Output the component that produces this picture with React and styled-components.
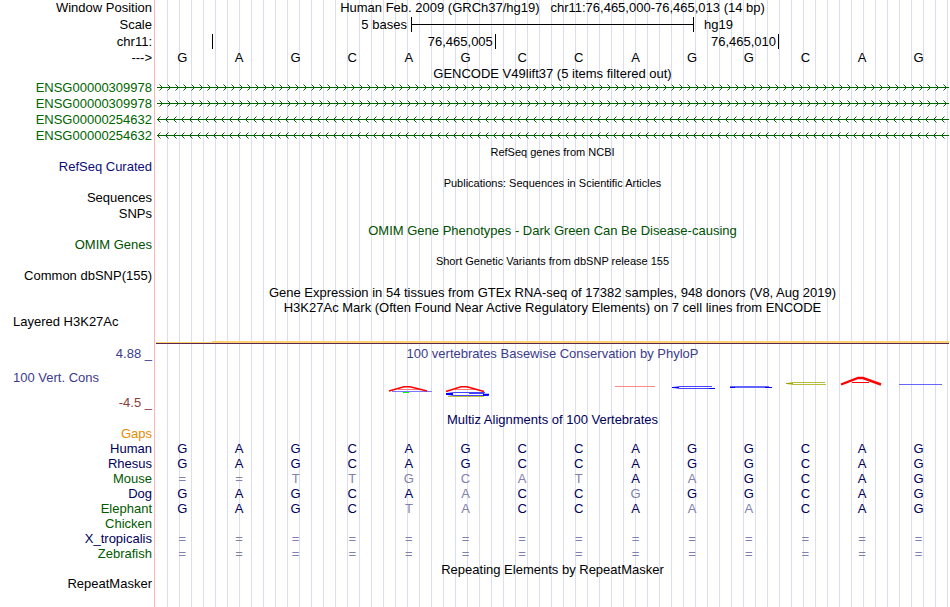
import styled, { createGlobalStyle } from "styled-components"

const species = [
    { name: "Human", color: "#00005a", bases: "GAGCAGCCAGGCAG", faded: "" },
    { name: "Rhesus", color: "#00005a", bases: "GAGCAGCCAGGCAG", faded: "" },
    { name: "Mouse", color: "#005a00", bases: "==TTGCATAAGCAG", faded: "xxxxxxxx.x...." },
    { name: "Dog", color: "#00005a", bases: "GAGCAACCGGGCAG", faded: ".....x..x....." },
    { name: "Elephant", color: "#005a00", bases: "GAGCTACCAAACAG", faded: "....xx...xx..." },
    { name: "Chicken", color: "#005a00", bases: "", faded: "" },
    { name: "X_tropicalis", color: "#00005a", bases: "==============", faded: "xxxxxxxxxxxxxx" },
    { name: "Zebrafish", color: "#005a00", bases: "==============", faded: "xxxxxxxxxxxxxx", height: 16 }
]

const genes = [
    { id: "ENSG00000309978", forward: true },
    { id: "ENSG00000309978", forward: true },
    { id: "ENSG00000254632", forward: false },
    { id: "ENSG00000254632", forward: false }
]

function Bases({ bases, faded = "", color }) {
    return (
        <BaseRow $color={color}>
            {bases.split("").map((b, i) => <Base key={i} $faded={faded[i] === "x"}>{b}</Base>)}
        </BaseRow>
    )
}

function GeneArrows({ id, forward }) {
    return (
        <Strand height="16" shapeRendering="crispEdges">
            <defs>
                <pattern id={id} width="8" height="16" patternUnits="userSpaceOnUse">
                    {forward
                        ? <>
                            <path d="M4 5h1v1h-1zM5 6h1v1h-1zM6 7h1v1h-1zM5 8h1v1h-1zM4 9h1v1h-1z" fill="#006400" />
                            <path d="M3 4h1v1h-1zM3 10h1v1h-1z" fill="#7fb17f" />
                        </>
                        : <>
                            <path d="M3 5h1v1h-1zM2 6h1v1h-1zM1 7h1v1h-1zM2 8h1v1h-1zM3 9h1v1h-1z" fill="#006400" />
                            <path d="M4 4h1v1h-1zM4 10h1v1h-1z" fill="#7fb17f" />
                        </>}
                </pattern>
            </defs>
            <rect width="100%" height="16" fill={`url(#${id})`} />
            <rect x="1" y="7" width="100%" height="1" fill="#006400" />
        </Strand>
    )
}

function Conservation() {
    return (
        <Logo height="51" viewBox="156 361 793 51" preserveAspectRatio="none" fill="none">
            <path d="M398 389.5H419" stroke="#f77" />
            <path d="M392 391.5H432" stroke="#77f" />
            <path d="M389 391L404 386.8H410L427 391" stroke="#f00" strokeWidth="1.6" />
            <path d="M403 392.5H409" stroke="#0f0" />
            <path d="M455 389.5H476" stroke="#f77" />
            <path d="M448 396.5H484" stroke="#c0c040" />
            <path d="M485 392.5H454L447 393.5V394.5L454 395.5H488M469 393.5H484" stroke="#44f" />
            <path d="M446 394H453M483 394.8H489" stroke="#00f" strokeWidth="2" />
            <path d="M446 391.5L461 386.8H467L484 391.5" stroke="#f00" strokeWidth="1.6" />
            <path d="M615 386.5H655" stroke="#f88" />
            <path d="M712 386.5H680L673 387.5L680 388.5H715" stroke="#44f" />
            <path d="M672 387.5H679M709 388.5H715" stroke="#00f" />
            <path d="M769 386.5H730M733 387.5H772" stroke="#66f" />
            <path d="M730 387.5H735M765 387.5H772" stroke="#00f" />
            <path d="M825 382.5H793L787 383.5L793 384.5H826" stroke="#bbbb3a" />
            <path d="M786 383.5H793" stroke="#a0a000" />
            <path d="M852 382.5H869" stroke="#f00" />
            <path d="M841 384.5L858 378H863L881 384.5" stroke="#f00" strokeWidth="2.4" />
            <path d="M899 384.5H942" stroke="#66f" />
        </Logo>
    )
}

export default function App() {
    return (
        <>
            <GlobalStyle />
            <Browser>
                <Row $height={17}>
                    <Label>Window Position</Label>
                    <Title>Human Feb. 2009 (GRCh37/hg19)&nbsp;&nbsp; chr11:76,465,000-76,465,013 (14 bp)</Title>
                </Row>
                <Row $height={17}>
                    <Label>Scale</Label>
                    <Scale>
                        <ScaleText $right>5 bases</ScaleText>
                        <ScaleBar />
                        <ScaleText>hg19</ScaleText>
                    </Scale>
                </Row>
                <Row $height={16}>
                    <Label>chr11:</Label>
                    <Ruler>
                        <Tick />
                        <Tick>76,465,005</Tick>
                        <Tick>76,465,010</Tick>
                    </Ruler>
                </Row>
                <Row $height={16}>
                    <Label>---&gt;</Label>
                    <Bases bases="GAGCAGCCAGGCAG" color="#000" />
                </Row>
                <Row $height={14}>
                    <Label />
                    <Title>GENCODE V49lift37 (5 items filtered out)</Title>
                </Row>
                {genes.map((g, i) => (
                    <Row key={i} $height={16}>
                        <Label $color="#006400">{g.id}</Label>
                        <GeneArrows id={`gene${i}`} forward={g.forward} />
                    </Row>
                ))}
                <Row $height={15}>
                    <Label />
                    <Title $small>RefSeq genes from NCBI</Title>
                </Row>
                <Row $height={16}>
                    <Label $color="#0c0c78">RefSeq Curated</Label>
                </Row>
                <Row $height={15}>
                    <Label />
                    <Title $small>Publications: Sequences in Scientific Articles</Title>
                </Row>
                <Row $height={16}>
                    <Label>Sequences</Label>
                </Row>
                <Row $height={17}>
                    <Label>SNPs</Label>
                </Row>
                <Row $height={14}>
                    <Label />
                    <Title $color="#005000">OMIM Gene Phenotypes - Dark Green Can Be Disease-causing</Title>
                </Row>
                <Row $height={16}>
                    <Label $color="#005000">OMIM Genes</Label>
                </Row>
                <Row $height={15}>
                    <Label />
                    <Title $small>Short Genetic Variants from dbSNP release 155</Title>
                </Row>
                <Row $height={17}>
                    <Label>Common dbSNP(155)</Label>
                </Row>
                <Row $height={15}>
                    <Label />
                    <Title>Gene Expression in 54 tissues from GTEx RNA-seq of 17382 samples, 948 donors (V8, Aug 2019)</Title>
                </Row>
                <Row $height={14}>
                    <Label />
                    <Title>H3K27Ac Mark (Often Found Near Active Regulatory Elements) on 7 cell lines from ENCODE</Title>
                </Row>
                <Row $height={32}>
                    <Label $left>Layered H3K27Ac</Label>
                    <Signal />
                </Row>
                <Row $height={15}>
                    <Label $color="#3c3c8c">4.88 _</Label>
                    <Title $color="#3c3c8c">100 vertebrates Basewise Conservation by PhyloP</Title>
                </Row>
                <Row $height={51}>
                    <ConsLabels>
                        <Label $left $color="#3c3c8c">100 Vert. Cons</Label>
                        <Label $color="#8c3c3c">-4.5 _</Label>
                    </ConsLabels>
                    <Conservation />
                </Row>
                <Row $height={14}>
                    <Label />
                    <Title $color="#00005a">Multiz Alignments of 100 Vertebrates</Title>
                </Row>
                <Row $height={15}>
                    <Label $color="#e68a00">Gaps</Label>
                </Row>
                {species.map((s) => (
                    <Row key={s.name} $height={s.height || 15}>
                        <Label $color={s.color}>{s.name}</Label>
                        <Bases bases={s.bases} faded={s.faded} color="#00005a" />
                    </Row>
                ))}
                <Row $height={14}>
                    <Label />
                    <Title>Repeating Elements by RepeatMasker</Title>
                </Row>
                <Row $height={15}>
                    <Label>RepeatMasker</Label>
                </Row>
            </Browser>
        </>
    )
}

const GlobalStyle = createGlobalStyle`
    body{
    margin: 0;
    background-color: #fff;
    color: #000;
    font-family: 'Liberation Sans', Arial, Helvetica, sans-serif;
    font-size: 13px;
    }
`
const Browser = styled.main`
    box-sizing: border-box;
    min-height: 100vh;
    padding-right: 1px;
    background-image:
        linear-gradient(to right, #fff 154px, #ffb4b4 154px, #ffb4b4 155px, transparent 155px),
        repeating-linear-gradient(to right, transparent 0px, transparent 11px, #dcdcf5 11px, #dcdcf5 12px);
    background-size: 156px 100%, calc(100% - 157px) 100%;
    background-position: 0px 0px, 156px 0px;
    background-repeat: no-repeat;
`
const Row = styled.div`
    display: grid;
    grid-template-columns: 156px 1fr;
    height: ${props => props.$height}px;
    line-height: 16px;
    white-space: nowrap;
`
const Label = styled.div`
    box-sizing: border-box;
    width: 156px;
    padding: 0px 4px 0px 13px;
    text-align: ${props => props.$left ? "left" : "right"};
    color: ${props => props.$color || "#000"};
`
const Title = styled.div`
    text-align: center;
    font-size: ${props => props.$small ? 11 : 13}px;
    color: ${props => props.$color || "#000"};
`
const Scale = styled.div`
    display: grid;
    grid-template-columns: 9fr 10fr 9fr;
`
const ScaleText = styled.span`
    padding: 0px ${props => props.$right ? 4 : 10}px;
    text-align: ${props => props.$right ? "right" : "left"};
`
const ScaleBar = styled.div`
    height: 15px;
    border-left: 1px solid #000;
    border-right: 1px solid #000;
    background: linear-gradient(#000, #000) 0px 7px / 100% 1px no-repeat;
`
const Ruler = styled.div`
    display: grid;
    grid-template-columns: 1fr 5fr 5fr 3fr;
`
const Tick = styled.div`
    height: 15px;
    padding-right: 2px;
    border-right: 1px solid #000;
    text-align: right;
`
const BaseRow = styled.div`
    display: grid;
    grid-template-columns: repeat(14, 1fr);
    margin: 0px 2px 0px -2px;
    text-align: center;
    color: ${props => props.$color};
`
const Base = styled.span`
    color: ${props => props.$faded ? "#8080ad" : "inherit"};
`
const Strand = styled.svg`
    display: block;
    width: 100%;
`
const Signal = styled.div`
    height: 2px;
    margin-top: 27px;
    background-image:
        linear-gradient(#ffd070, #ffd070),
        linear-gradient(#ffd070, #ffd070);
    background-size: 100% 1px, 93% 1px;
    background-position: left bottom, right top;
    background-repeat: no-repeat;
    background-origin: padding-box;
    background-clip: padding-box;
    border-bottom: 1px solid #5a2850;
`
const ConsLabels = styled.div`
    display: flex;
    flex-direction: column;
    justify-content: space-between;
    padding: 9px 0px 1px;
`
const Logo = styled.svg`
    display: block;
    width: 100%;
`
